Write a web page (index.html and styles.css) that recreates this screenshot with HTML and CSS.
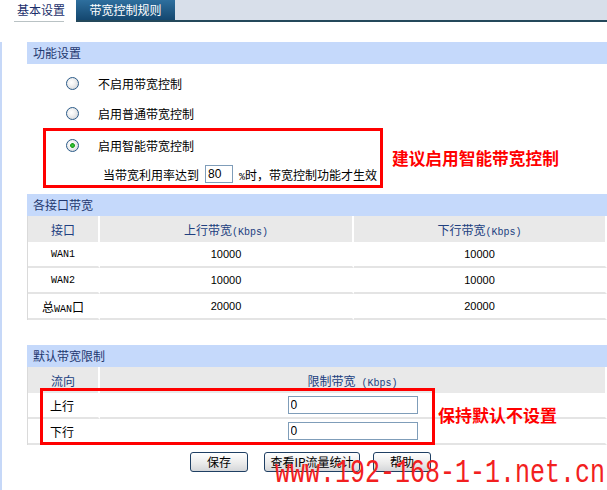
FILE: index.html
```html
<!DOCTYPE html>
<html lang="zh-CN">
<head>
<meta charset="utf-8">
<title>带宽控制</title>
<link rel="stylesheet" href="styles.css">
</head>
<body>
<div class="tabbar">
  <div class="tab-active"><span>基本设置</span></div>
  <div class="tab-rest"><div class="tab-dark">带宽控制规则</div></div>
</div>
<div class="page">
  <section class="panel first">
    <div class="panel-head">功能设置</div>
    <div class="panel-body">
      <label class="opt"><input class="radio" type="radio" name="mode"><span>不启用带宽控制</span></label>
      <label class="opt"><input class="radio" type="radio" name="mode"><span>启用普通带宽控制</span></label>
      <div class="advice">
        <div class="advice-box">
          <label class="opt opt-in"><input class="radio" type="radio" name="mode" checked><span>启用智能带宽控制</span></label>
          <div class="rate"><span>当带宽利用率达到</span><input class="field small" type="text" value="80"><span><span class="mono">%</span>时，带宽控制功能才生效</span></div>
        </div>
        <div class="note">建议启用智能带宽控制</div>
      </div>
    </div>
  </section>

  <section class="panel second">
    <div class="panel-head">各接口带宽</div>
    <table class="grid">
      <tr><th class="c1">接口</th><th class="c2">上行带宽<span class="mono">(Kbps)</span></th><th class="c3">下行带宽<span class="mono">(Kbps)</span></th></tr>
      <tr><td class="mono">WAN1</td><td class="num">10000</td><td class="num">10000</td></tr>
      <tr><td class="mono">WAN2</td><td class="num">10000</td><td class="num">10000</td></tr>
      <tr><td>总<span class="mono">WAN</span>口</td><td class="num">20000</td><td class="num">20000</td></tr>
    </table>
  </section>

  <section class="panel third">
    <div class="panel-head">默认带宽限制</div>
    <table class="grid">
      <tr><th class="c1">流向</th><th class="c23">限制带宽<span class="mono"> (Kbps)</span></th></tr>
      <tr><td class="dir">上行</td><td><input class="field wide" type="text" value="0"></td></tr>
      <tr><td class="dir">下行</td><td><input class="field wide" type="text" value="0"></td></tr>
    </table>
    <div class="mark-box"></div>
    <div class="note note-abs">保持默认不设置</div>
    <div class="actions">
      <button class="btn" type="button">保存</button>
      <button class="btn btn-wide" type="button">查看IP流量统计</button>
      <button class="btn btn-help" type="button">帮助</button>
    </div>
  </section>
</div>
<div class="watermark">www.192-168-1-1.net.cn</div>
</body>
</html>
```
FILE: styles.css
```css
* { box-sizing: border-box; }
html, body { margin: 0; padding: 0; }
body {
  width: 607px;
  height: 490px;
  overflow: hidden;
  position: relative;
  background: #fff;
  font-family: "Noto Sans CJK SC", "Liberation Sans", sans-serif;
  font-size: 12px;
  color: #000;
}

/* tabs */
.tabbar { display: flex; height: 22px; }
.tab-active { width: 76px; background: #fff; }
.tab-active span {
  display: block;
  margin-left: 14px;
  width: 50px;
  height: 22px;
  line-height: 20px;
  padding-left: 3px;
  white-space: nowrap;
  border-bottom: 1px solid #b9c2c4;
  color: #1b2f6b;
}
.tab-rest {
  flex: 1;
  display: flex;
  background: #d8dfea;
  border-bottom: 2px solid #24485b;
}
.tab-dark {
  width: 99px;
  height: 20px;
  line-height: 20px;
  text-align: center;
  color: #fff;
  background: linear-gradient(#2e6f9e, #14476f);
}

/* page */
.page {
  margin-top: 20px;
  border-left: 2px solid #c6d8f8;
  padding-left: 25px;
  height: 448px;
}
.panel { width: 580px; position: relative; }
.panel.first { margin-top: 3px; }
.panel.second { margin-top: 6px; }
.panel.third { margin-top: 25px; }
.panel-head {
  height: 22px;
  line-height: 22px;
  padding-left: 6px;
  background: #c5d9fb;
  color: #1f386f;
}
.panel-body { padding-top: 4px; }

.opt {
  display: flex;
  align-items: center;
  height: 30px;
  padding-left: 39px;
}
.radio {
  -webkit-appearance: none;
  appearance: none;
  flex: none;
  margin: 0 19px 0 0;
  width: 13px;
  height: 13px;
  border-radius: 50%;
  border: 1px solid #2a5a88;
  background: radial-gradient(circle at 40% 40%, #ffffff 0, #f2f2f2 35%, #c8ccd2 100%);
}
.radio:checked {
  background:
    radial-gradient(circle, #3bd23b 0, #1c9c1c 2px, rgba(0,0,0,0) 2.8px),
    radial-gradient(circle at 40% 40%, #ffffff 0, #eeeeee 45%, #c8ccd2 100%);
}

.advice { display: flex; align-items: center; margin-left: 16px; }
.advice-box { width: 340px; border: 3px solid #ff0000; }
.advice-box .opt { height: 28px; padding-left: 20px; }
.rate {
  display: flex;
  align-items: center;
  height: 26px;
  padding-top: 4px;
  padding-left: 57px;
  white-space: nowrap;
}
.note {
  color: #f00;
  font-weight: bold;
  font-size: 16.7px;
  white-space: nowrap;
}
.advice .note { margin-left: 9px; }

.field {
  height: 18px;
  border: 1px solid #7f9db9;
  padding: 0 0 0 2px;
  font-family: "Liberation Sans", sans-serif;
  font-size: 12px;
  color: #000;
  background: #fff;
  outline: none;
}
.small { width: 28px; margin: 0 6px; }
.wide { width: 130px; display: block; margin: 0 auto; }

.mono { font-family: "Liberation Mono", "Noto Sans CJK SC", monospace; font-size: 10px; }
.num { font-family: "Liberation Sans", sans-serif; font-size: 11px; }

/* tables */
.grid {
  width: 580px;
  table-layout: fixed;
  border-collapse: separate;
  border-spacing: 0;
  border-left: 1px solid #dadada;
}
.grid th, .grid td {
  height: 26px;
  padding: 0;
  text-align: center;
  vertical-align: middle;
  border-right: 2px solid #fff;
  font-weight: normal;
}
.grid td { border-bottom: 2px solid #e4e4e4; }
.grid th { background: #e9e9e9; color: #21407f; }
.grid th.c1 { width: 72px; }
.grid th.c2 { width: 254px; }
.grid td.dir { text-align: left; padding-left: 22px; }

.mark-box {
  position: absolute;
  left: 13px;
  top: 43px;
  width: 395px;
  height: 57px;
  border: 3px solid #ff0000;
}
.note-abs {
  position: absolute;
  left: 411px;
  top: 60px;
  line-height: 20px;
  font-size: 17px;
}

.actions { display: flex; padding-left: 163px; margin-top: 7px; }
.btn {
  height: 20px;
  width: 58px;
  padding: 0;
  border: 1px solid #1f3f63;
  border-radius: 3px;
  background: linear-gradient(#ffffff, #e9e9e9 60%, #d4d6d9);
  font-family: "Noto Sans CJK SC", sans-serif;
  font-size: 12px;
  line-height: 18px;
  color: #000;
}
.btn-wide { width: 96px; margin-left: 16px; }
.btn-help { margin-left: 13px; }

.watermark {
  position: absolute;
  left: 275px;
  top: 465px;
  font-family: "Liberation Mono", monospace;
  font-size: 25px;
  line-height: 25px;
  color: #f22020;
  white-space: nowrap;
  transform: scaleY(1.33);
  transform-origin: left bottom;
  pointer-events: none;
}
```
